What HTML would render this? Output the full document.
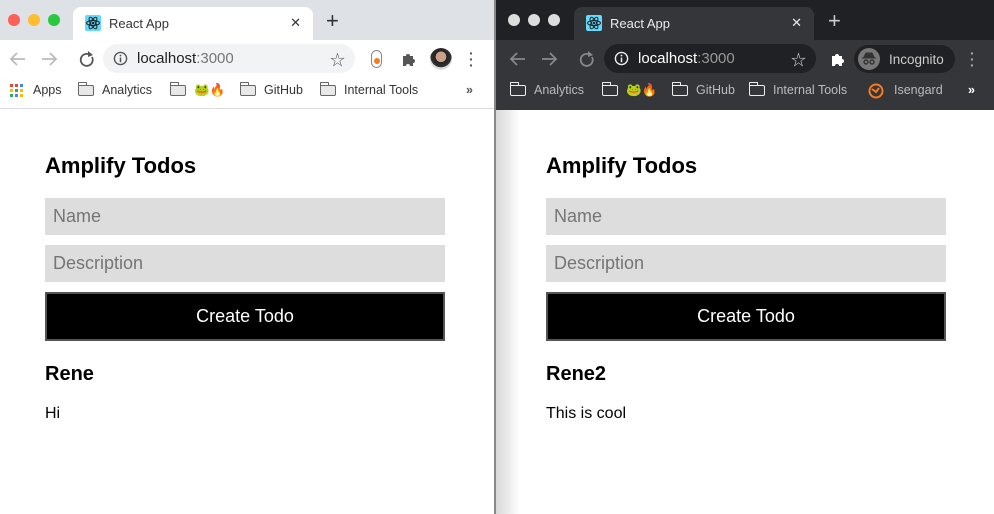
<!DOCTYPE html>
<html><head><meta charset="utf-8">
<style>
*{margin:0;padding:0;box-sizing:border-box}
body{width:994px;height:514px;overflow:hidden;position:relative;background:#fff;font-family:"Liberation Sans","Noto Sans CJK JP",sans-serif}
.abs{position:absolute}
.win{position:absolute;top:0;height:514px;overflow:hidden}
.dot{position:absolute;top:14px;width:12px;height:12px;border-radius:50%}
.tab{position:absolute;left:73px;top:7px;width:240px;height:33px;border-radius:8px 8px 0 0}
.tab .t{position:absolute;left:36px;top:9px;font-size:13px}
.tab .x{position:absolute;right:12px;top:8px;font-size:13px}
.plus{position:absolute;left:326px;top:8px;font-size:22px;font-weight:300}
.omni{position:absolute;top:44px;height:29px;border-radius:15px}
.omni .u{position:absolute;left:34px;top:6px;font-size:15px}
.bm{position:absolute;top:83px;font-size:12.5px;white-space:nowrap}
.folder{display:inline-block;width:16px;height:11px;border:1.5px solid;border-radius:1px 2px 2px 2px;vertical-align:-2px;margin-right:8px;position:relative}
.folder:before{content:"";position:absolute;left:-1.5px;top:-4px;width:7px;height:3px;border:1.5px solid;border-color:inherit;border-bottom:none;border-radius:1px 1px 0 0}
.content h1{position:absolute;top:153px;font-size:22px;font-weight:bold;color:#000}
.inp{position:absolute;width:400px;height:37px;background:#ddd;color:#757575;font-size:18px;padding:8px 8px}
.btn{position:absolute;width:400px;height:49px;background:#000;border:2px solid #555;color:#fff;font-size:18px;text-align:center;line-height:45px}
.h2{position:absolute;top:363px;font-size:20px;font-weight:bold}
.p{position:absolute;top:405px;font-size:16px}
</style></head><body>

<!-- LEFT WINDOW -->
<div class="win" style="left:0;width:495px;background:#fff">
  <div class="abs" style="left:0;top:0;width:495px;height:40px;background:#dee1e6"></div>
  <div class="dot" style="left:8px;background:#fe5f57"></div>
  <div class="dot" style="left:28px;background:#febc2e"></div>
  <div class="dot" style="left:48px;background:#28c840"></div>
  <div class="tab" style="background:#fff;color:#333">
    <svg class="abs" style="left:12px;top:8px" width="16" height="16" viewBox="0 0 16 16"><rect width="16" height="16" rx="2" fill="#61dafb"/><g fill="none" stroke="#20232a" stroke-width="1"><ellipse cx="8" cy="8" rx="6.5" ry="2.5"/><ellipse cx="8" cy="8" rx="6.5" ry="2.5" transform="rotate(60 8 8)"/><ellipse cx="8" cy="8" rx="6.5" ry="2.5" transform="rotate(120 8 8)"/></g><circle cx="8" cy="8" r="1.3" fill="#20232a"/></svg>
    <span class="t">React App</span><span class="x">✕</span>
  </div>
  <div class="plus" style="color:#333">+</div>
  <div class="abs" style="left:0;top:40px;width:495px;height:69px;background:#fff;border-bottom:1px solid #ddd"></div>
  <svg class="abs" style="left:8px;top:50px" width="100" height="18" viewBox="0 0 100 18"><g fill="none" stroke="#bbb" stroke-width="1.8"><path d="M17 9H3M9 3L3 9l6 6"/><path d="M34 9h14M42 3l6 6-6 6"/></g><path d="M80 4a6 6 0 1 0 4 3" fill="none" stroke="#555" stroke-width="1.8"/><path d="M80 1l5 4-5 2z" fill="#555"/></svg>
  <div class="omni" style="left:103px;width:252px;background:#f1f3f4">
    <svg class="abs" style="left:10px;top:7px" width="15" height="15" viewBox="0 0 16 16"><circle cx="8" cy="8" r="6.5" fill="none" stroke="#555" stroke-width="1.5"/><rect x="7.2" y="7" width="1.6" height="5" fill="#555"/><circle cx="8" cy="4.8" r="1" fill="#555"/></svg>
    <span class="u" style="color:#202124">localhost<span style="color:#777">:3000</span></span>
    <span class="abs" style="right:10px;top:5px;font-size:15px;color:#555">☆</span>
  </div>
  <div class="abs" style="left:371px;top:50px;width:11px;height:18px;border:1.5px solid #888;border-radius:6px"></div>
  <div class="abs" style="left:374px;top:58px;width:6px;height:6px;border-radius:50%;background:#f57c20"></div>
  <svg class="abs" style="left:401px;top:51px" width="16" height="16" viewBox="0 0 16 16"><path d="M2 5h3a2 2 0 1 1 4 0h3v3a2 2 0 1 1 0 4v3H9a2 2 0 1 0-4 0H2z" fill="#555"/></svg>
  <div class="abs" style="left:430px;top:48px;width:22px;height:22px;border-radius:50%;background:radial-gradient(circle at 50% 40%,#c9a08a 30%,#222 32%,#333 60%,#ddd 62%)"></div>
  <div class="abs" style="left:469px;top:50px;color:#555;font-size:14px;line-height:6px;font-weight:bold">·<br>·<br>·</div>
  <svg class="abs" style="left:10px;top:84px" width="13" height="13" viewBox="0 0 13 13"><rect x="0" y="0" width="3" height="3" fill="#ea4335"/><rect x="5" y="0" width="3" height="3" fill="#ea4335"/><rect x="10" y="0" width="3" height="3" fill="#4285f4"/><rect x="0" y="5" width="3" height="3" fill="#fbbc05"/><rect x="5" y="5" width="3" height="3" fill="#34a853"/><rect x="10" y="5" width="3" height="3" fill="#fbbc05"/><rect x="0" y="10" width="3" height="3" fill="#34a853"/><rect x="5" y="10" width="3" height="3" fill="#4285f4"/><rect x="10" y="10" width="3" height="3" fill="#fbbc05"/></svg>
  <div class="bm" style="left:33px;color:#333">Apps</div>
  <div class="bm" style="left:78px;color:#333"><span class="folder" style="border-color:#666;background:#e8e8e8"></span>Analytics</div>
  <div class="bm" style="left:170px;color:#333"><span class="folder" style="border-color:#666;background:#e8e8e8"></span>🐸🔥</div>
  <div class="bm" style="left:240px;color:#333"><span class="folder" style="border-color:#666;background:#e8e8e8"></span>GitHub</div>
  <div class="bm" style="left:320px;color:#333"><span class="folder" style="border-color:#666;background:#e8e8e8"></span>Internal Tools</div>
  <div class="bm" style="left:466px;color:#555;font-weight:bold">»</div>
  <div class="content">
    <h1 style="left:45px">Amplify Todos</h1>
    <div class="inp" style="left:45px;top:198px">Name</div>
    <div class="inp" style="left:45px;top:245px">Description</div>
    <div class="btn" style="left:45px;top:292px">Create Todo</div>
    <div class="h2" style="left:45px">Rene</div>
    <div class="p" style="left:45px">Hi</div>
  </div>
</div>
<div class="abs" style="left:494px;top:0;width:2px;height:514px;background:#888"></div>

<!-- RIGHT WINDOW -->
<div class="win" style="left:496px;width:498px;background:#fff">
  <div class="abs" style="left:0;top:110px;width:24px;height:404px;background:linear-gradient(90deg,#d8d8d8,#fff)"></div>
  <div class="abs" style="left:0;top:0;width:498px;height:40px;background:#202124"></div>
  <div class="dot" style="left:12px;background:#ddd"></div>
  <div class="dot" style="left:32px;background:#ddd"></div>
  <div class="dot" style="left:52px;background:#ddd"></div>
  <div class="tab" style="left:78px;background:#35363a;color:#e8eaed">
    <svg class="abs" style="left:12px;top:8px" width="16" height="16" viewBox="0 0 16 16"><rect width="16" height="16" rx="2" fill="#61dafb"/><g fill="none" stroke="#20232a" stroke-width="1"><ellipse cx="8" cy="8" rx="6.5" ry="2.5"/><ellipse cx="8" cy="8" rx="6.5" ry="2.5" transform="rotate(60 8 8)"/><ellipse cx="8" cy="8" rx="6.5" ry="2.5" transform="rotate(120 8 8)"/></g><circle cx="8" cy="8" r="1.3" fill="#20232a"/></svg>
    <span class="t">React App</span><span class="x">✕</span>
  </div>
  <div class="plus" style="left:332px;color:#ccc">+</div>
  <div class="abs" style="left:0;top:40px;width:498px;height:70px;background:#35363a"></div>
  <svg class="abs" style="left:12px;top:50px" width="100" height="18" viewBox="0 0 100 18"><g fill="none" stroke="#888" stroke-width="1.8"><path d="M17 9H3M9 3L3 9l6 6"/><path d="M34 9h14M42 3l6 6-6 6"/></g><path d="M80 4a6 6 0 1 0 4 3" fill="none" stroke="#888" stroke-width="1.8"/><path d="M80 1l5 4-5 2z" fill="#888"/></svg>
  <div class="omni" style="left:108px;width:212px;background:#202124">
    <svg class="abs" style="left:10px;top:7px" width="15" height="15" viewBox="0 0 16 16"><circle cx="8" cy="8" r="6.5" fill="none" stroke="#eee" stroke-width="1.5"/><rect x="7.2" y="7" width="1.6" height="5" fill="#eee"/><circle cx="8" cy="4.8" r="1" fill="#eee"/></svg>
    <span class="u" style="color:#fff">localhost<span style="color:#999">:3000</span></span>
    <span class="abs" style="right:10px;top:5px;font-size:15px;color:#ddd">☆</span>
  </div>
  <svg class="abs" style="left:334px;top:51px" width="16" height="16" viewBox="0 0 16 16"><path d="M2 5h3a2 2 0 1 1 4 0h3v3a2 2 0 1 1 0 4v3H9a2 2 0 1 0-4 0H2z" fill="#fff"/></svg>
  <div class="abs" style="left:358px;top:45px;width:101px;height:28px;border-radius:14px;background:#202124"></div>
  <div class="abs" style="left:362px;top:48px;width:22px;height:22px;border-radius:50%;background:#777"></div>
  <svg class="abs" style="left:365px;top:52px" width="16" height="14" viewBox="0 0 16 14"><path d="M3 5h10l-2-4H5z M1 6h14" fill="#333" stroke="#333"/><circle cx="5" cy="10" r="2" fill="none" stroke="#333" stroke-width="1.4"/><circle cx="11" cy="10" r="2" fill="none" stroke="#333" stroke-width="1.4"/></svg>
  <div class="abs" style="left:393px;top:52px;font-size:13.5px;color:#ccc">Incognito</div>
  <div class="abs" style="left:474px;top:50px;color:#aaa;font-size:14px;line-height:6px;font-weight:bold">·<br>·<br>·</div>
  <div class="bm" style="left:14px;color:#bbb"><span class="folder" style="border-color:#eee"></span>Analytics</div>
  <div class="bm" style="left:106px;color:#bbb"><span class="folder" style="border-color:#eee"></span>🐸🔥</div>
  <div class="bm" style="left:176px;color:#bbb"><span class="folder" style="border-color:#eee"></span>GitHub</div>
  <div class="bm" style="left:253px;color:#bbb"><span class="folder" style="border-color:#eee"></span>Internal Tools</div>
  <svg class="abs" style="left:372px;top:83px" width="16" height="16" viewBox="0 0 16 16"><circle cx="8" cy="8" r="6.5" fill="none" stroke="#f57c20" stroke-width="2"/><path d="M4 6l4 3 3-4" fill="none" stroke="#f57c20" stroke-width="2"/></svg>
  <div class="bm" style="left:398px;color:#bbb">Isengard</div>
  <div class="bm" style="left:472px;color:#fff;font-weight:bold">»</div>
  <div class="content">
    <h1 style="left:50px">Amplify Todos</h1>
    <div class="inp" style="left:50px;top:198px">Name</div>
    <div class="inp" style="left:50px;top:245px">Description</div>
    <div class="btn" style="left:50px;top:292px">Create Todo</div>
    <div class="h2" style="left:50px">Rene2</div>
    <div class="p" style="left:50px">This is cool</div>
  </div>
</div>
</body></html>
